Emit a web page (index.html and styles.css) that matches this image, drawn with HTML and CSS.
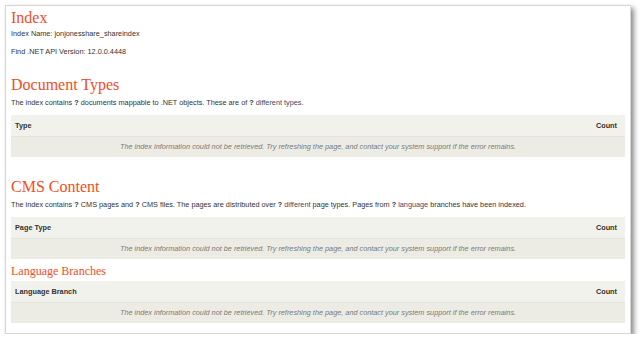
FILE: index.html
```html
<!DOCTYPE html>
<html>
<head>
<meta charset="utf-8">
<link rel="stylesheet" href="styles.css">
</head>
<body>
<div class="panel">
  <h1 class="title">Index</h1>
  <p class="info">Index Name: jonjonesshare_shareindex</p>
  <p class="info">Find .NET API Version: 12.0.0.4448</p>

  <h2 class="title section">Document Types</h2>
  <p class="lead">The index contains <b>?</b> documents mappable to .NET objects. These are of <b>?</b> <span class="link">different types</span>.</p>
  <div class="table">
    <div class="thead"><span>Type</span><span>Count</span></div>
    <div class="trow">The index information could not be retrieved. Try refreshing the page, and contact your system support if the error remains.</div>
  </div>

  <h2 class="title section">CMS Content</h2>
  <p class="lead">The index contains <b>?</b> CMS pages and <b>?</b> CMS files. The pages are distributed over <b>?</b> <span class="link">different</span> page types. Pages from <b>?</b> <span class="link">language</span> branches have been indexed.</p>
  <div class="table">
    <div class="thead"><span>Page Type</span><span>Count</span></div>
    <div class="trow">The index information could not be retrieved. Try refreshing the page, and contact your system support if the error remains.</div>
  </div>

  <h3 class="title sub">Language Branches</h3>
  <div class="table">
    <div class="thead"><span>Language Branch</span><span>Count</span></div>
    <div class="trow">The index information could not be retrieved. Try refreshing the page, and contact your system support if the error remains.</div>
  </div>
</div>
</body>
</html>
```

FILE: styles.css
```css
html, body {
  margin: 0;
  padding: 0;
  background: #ffffff;
}
body {
  padding: 5px 0 0 5px;
  font-family: "Liberation Sans", Arial, sans-serif;
  font-size: 7.3px;
  color: #333333;
}
.panel {
  width: 614px;
  border: 1px solid #d6d6d6;
  background: #fff;
  padding: 3px 5px 10px 5px;
  box-shadow: 3px 3px 5px rgba(0,0,0,0.45);
}
.title {
  font-family: "Liberation Serif", Georgia, serif;
  font-weight: normal;
  color: #f24d1d;
  margin: 0;
}
h1.title {
  font-size: 16px;
  line-height: 18px;
}
.info {
  margin: 2px 0 0 0;
  line-height: 10px;
}
.info + .info {
  margin-top: 8px;
}
.section {
  font-size: 16px;
  line-height: 18px;
  margin-top: 19px;
}
.lead {
  margin: 4px 0 0 0;
  line-height: 10px;
}
.link {
  color: #3b4a66;
}
b { color: #333; }
.table {
  margin-top: 7px;
}
.thead {
  display: flex;
  justify-content: space-between;
  align-items: center;
  background: #f2f2ec;
  border-bottom: 1px solid #e4e4dc;
  height: 21px;
  padding: 0 8px 0 4px;
  font-weight: bold;
  color: #333;
}
.trow {
  background: #ecece4;
  height: 20px;
  line-height: 20px;
  text-align: center;
  font-style: italic;
  color: #7a7a7a;
}
.table + .section {
  margin-top: 21px;
}
.sub {
  font-size: 12px;
  line-height: 14px;
  margin-top: 5px;
}
.sub + .table {
  margin-top: 3px;
}
```
